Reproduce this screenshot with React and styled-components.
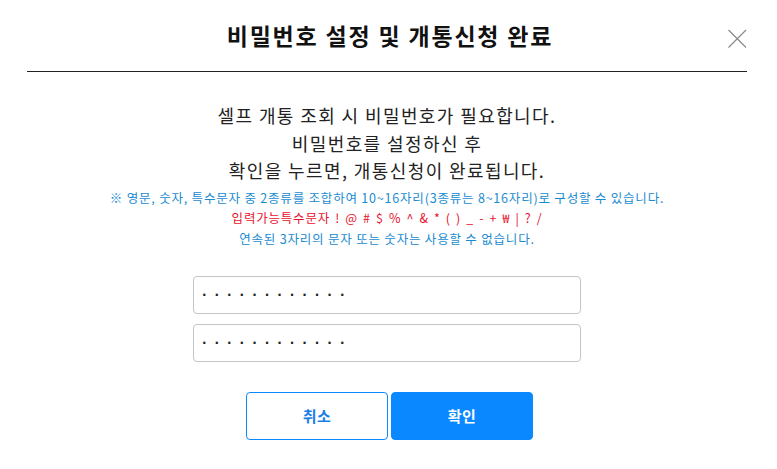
import React from "react";
import styled, { createGlobalStyle } from "styled-components";

const GlobalStyle = createGlobalStyle`
  html, body {
    margin: 0;
    padding: 0;
    background: #fff;
  }
  body {
    font-family: "Noto Sans CJK KR", "Noto Sans", sans-serif;
  }
`;

const Modal = styled.div`
  width: 777px;
  height: 469px;
  box-sizing: border-box;
  padding: 0 30px 0 27px;
  display: flex;
  flex-direction: column;
  align-items: stretch;
`;

const Header = styled.div`
  position: relative;
  height: 71px;
  border-bottom: 1px solid #222;
  display: flex;
  align-items: center;
  justify-content: center;
`;

const Title = styled.h2`
  margin: 0 0 2px 6px;
  font-size: 23px;
  font-weight: 700;
  color: #111;
  letter-spacing: 1.8px;
`;

const CloseButton = styled.button`
  position: absolute;
  right: 0;
  top: 29px;
  width: 20px;
  height: 20px;
  padding: 0;
  border: none;
  background: transparent;
  cursor: pointer;
  display: flex;
`;

const Body = styled.div`
  display: flex;
  flex-direction: column;
  align-items: center;
  padding-top: 30px;
`;

const Lead = styled.p`
  margin: 0;
  font-size: 18px;
  line-height: 27.5px;
  color: #222;
  text-align: center;
  letter-spacing: 1.4px;
`;

const Notice = styled.p`
  margin: 0;
  font-size: 12.5px;
  line-height: 20.3px;
  color: ${(p) => p.$color};
  text-align: center;
  letter-spacing: 0.8px;
  word-spacing: ${(p) => p.$wordSpacing || "0"};
`;

const Notices = styled.div`
  display: flex;
  flex-direction: column;
  align-items: center;
  margin-top: 3.5px;
`;

const Fields = styled.div`
  display: flex;
  flex-direction: column;
  gap: 10px;
  margin-top: 27px;
`;

const Field = styled.input`
  width: 388px;
  height: 38px;
  box-sizing: border-box;
  border: 1px solid #c4c4c4;
  border-radius: 4px;
  padding: 0 8px;
  font-family: "DejaVu Sans", sans-serif;
  font-size: 12px;
  font-weight: 700;
  color: #222;
  letter-spacing: 1.9px;
  outline: none;
`;

const Actions = styled.div`
  display: flex;
  gap: 3px;
  padding-left: 5px;
  margin-top: 30px;
`;

const Button = styled.button`
  width: 142px;
  height: 48px;
  box-sizing: border-box;
  border-radius: 4px;
  border: 1px solid #0a88ff;
  background: ${(p) => (p.$primary ? "#0a88ff" : "#fff")};
  color: ${(p) => (p.$primary ? "#fff" : "#1a7fe6")};
  font-family: "Noto Sans CJK KR", sans-serif;
  font-size: 15px;
  font-weight: 700;
  letter-spacing: 0.5px;
  cursor: pointer;
`;

const dots = "· · · · · · · · · · · ·";

export default function App() {
  return (
    <>
      <GlobalStyle />
      <Modal>
        <Header>
          <Title>비밀번호 설정 및 개통신청 완료</Title>
          <CloseButton aria-label="닫기">
            <svg width="20" height="20" viewBox="0 0 20 20">
              <path d="M1.5 1 L19 18.5 M19 1 L1.5 18.5" stroke="#8a8a8a" strokeWidth="1.2" fill="none" />
            </svg>
          </CloseButton>
        </Header>
        <Body>
          <Lead>셀프 개통 조회 시 비밀번호가 필요합니다.</Lead>
          <Lead>비밀번호를 설정하신 후</Lead>
          <Lead>확인을 누르면, 개통신청이 완료됩니다.</Lead>
          <Notices>
            <Notice $color="#1a8bd0">
              ※ 영문, 숫자, 특수문자 중 2종류를 조합하여 10~16자리(3종류는 8~16자리)로 구성할 수 있습니다.
            </Notice>
            <Notice $color="#e8112d" $wordSpacing="1.6px">
              입력가능특수문자 ! @ # $ % ^ &amp; * ( ) _ - + ₩ | ? /
            </Notice>
            <Notice $color="#1a8bd0">연속된 3자리의 문자 또는 숫자는 사용할 수 없습니다.</Notice>
          </Notices>
          <Fields>
            <Field type="text" readOnly value={dots} />
            <Field type="text" readOnly value={dots} />
          </Fields>
          <Actions>
            <Button>취소</Button>
            <Button $primary>확인</Button>
          </Actions>
        </Body>
      </Modal>
    </>
  );
}
